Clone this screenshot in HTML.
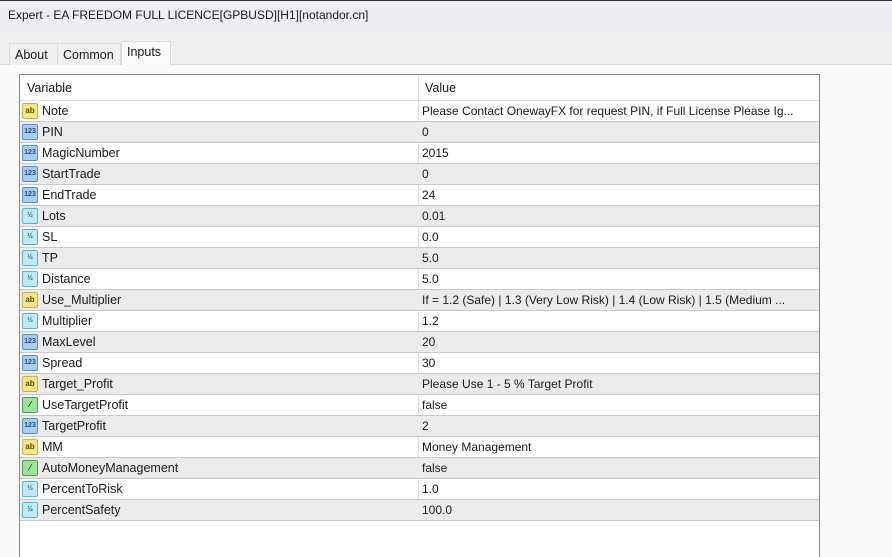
<!DOCTYPE html>
<html style="width:892px;height:557px;overflow:hidden"><head><meta charset="utf-8"><style>
*{margin:0;padding:0;box-sizing:border-box}
body{width:892px;height:557px;overflow:hidden;background:#f9f9f9;font-family:"Liberation Sans",sans-serif;font-size:12px;color:#1a1a1a;position:relative}
.top{position:absolute;left:0;top:0;width:892px;height:1px;background:#333}
.title{position:absolute;left:0;top:1px;width:892px;height:31px;background:#eeeef2;padding:7px 0 0 8px;font-size:12px}
.tabbar{position:absolute;left:0;top:32px;width:892px;height:33px;background:#f0f0f0;border-bottom:1px solid #dcdcdc}
.tab{position:absolute;top:11px;height:22px;border:1px solid #dadada;border-bottom:none;background:#f0f0f0;padding:4px 0 0 5px;font-size:12.5px}
.tab.sel{top:9px;height:24px;background:#fafafa;padding-top:3px}
.grid{position:absolute;left:19px;top:74px;width:801px;height:500px;border:1px solid #8a8a8a;background:#fff}
.hdr{height:26px;position:relative;border-bottom:1px solid #e0e0e0}
.hdr span{position:absolute;top:6px;font-size:12.5px}
.row{height:21px;position:relative;border-bottom:1px solid #c9c9c9}
.row.g{background:#ebebeb}
.row .n{position:absolute;left:22px;top:3px;font-size:12.5px}
.row .v{position:absolute;left:402px;top:3px;font-size:12px;white-space:nowrap}
.div{position:absolute;left:398px;top:0;width:1px;height:446px;background:#dcdcdc}
.ic{position:absolute;left:2px;top:2px;width:16px;height:16px;border-radius:2px;font-size:8px;line-height:14px;text-align:center;font-weight:bold}
.ab{background:#f4e68a;border:1px solid #c9b24a;color:#5a4a00}
.i{background:#a9cdf0;border:1px solid #5b8fc4;color:#1d4a80;font-size:7px}
.d{background:#bfeaf5;border:1px solid #5db3cc;color:#1d6c80;font-size:7px}
.b{background:#9be39b;border:1px solid #45a545;color:#135}
</style></head><body>
<div class="top"></div>
<div class="title">Expert - EA FREEDOM FULL LICENCE[GPBUSD][H1][notandor.cn]</div>
<div class="tabbar">
<div class="tab" style="left:9px;width:49px">About</div>
<div class="tab" style="left:57px;width:64px">Common</div>
<div class="tab sel" style="left:121px;width:50px">Inputs</div>
</div>
<div class="grid">
<div class="div"></div>
<div class="hdr"><span style="left:7px">Variable</span><span style="left:405px">Value</span></div>
<div class="row"><div class="ic ab">ab</div><span class="n">Note</span><span class="v">Please Contact OnewayFX for request PIN, if Full License Please Ig...</span></div>
<div class="row g"><div class="ic i">123</div><span class="n">PIN</span><span class="v">0</span></div>
<div class="row"><div class="ic i">123</div><span class="n">MagicNumber</span><span class="v">2015</span></div>
<div class="row g"><div class="ic i">123</div><span class="n">StartTrade</span><span class="v">0</span></div>
<div class="row"><div class="ic i">123</div><span class="n">EndTrade</span><span class="v">24</span></div>
<div class="row g"><div class="ic d">½</div><span class="n">Lots</span><span class="v">0.01</span></div>
<div class="row"><div class="ic d">½</div><span class="n">SL</span><span class="v">0.0</span></div>
<div class="row g"><div class="ic d">½</div><span class="n">TP</span><span class="v">5.0</span></div>
<div class="row"><div class="ic d">½</div><span class="n">Distance</span><span class="v">5.0</span></div>
<div class="row g"><div class="ic ab">ab</div><span class="n">Use_Multiplier</span><span class="v">If = 1.2 (Safe) | 1.3 (Very Low Risk) | 1.4 (Low Risk) | 1.5 (Medium ...</span></div>
<div class="row"><div class="ic d">½</div><span class="n">Multiplier</span><span class="v">1.2</span></div>
<div class="row g"><div class="ic i">123</div><span class="n">MaxLevel</span><span class="v">20</span></div>
<div class="row"><div class="ic i">123</div><span class="n">Spread</span><span class="v">30</span></div>
<div class="row g"><div class="ic ab">ab</div><span class="n">Target_Profit</span><span class="v">Please Use 1 - 5 % Target Profit</span></div>
<div class="row"><div class="ic b">⁄</div><span class="n">UseTargetProfit</span><span class="v">false</span></div>
<div class="row g"><div class="ic i">123</div><span class="n">TargetProfit</span><span class="v">2</span></div>
<div class="row"><div class="ic ab">ab</div><span class="n">MM</span><span class="v">Money Management</span></div>
<div class="row g"><div class="ic b">⁄</div><span class="n">AutoMoneyManagement</span><span class="v">false</span></div>
<div class="row"><div class="ic d">½</div><span class="n">PercentToRisk</span><span class="v">1.0</span></div>
<div class="row g"><div class="ic d">½</div><span class="n">PercentSafety</span><span class="v">100.0</span></div>
</div>
</body></html>
